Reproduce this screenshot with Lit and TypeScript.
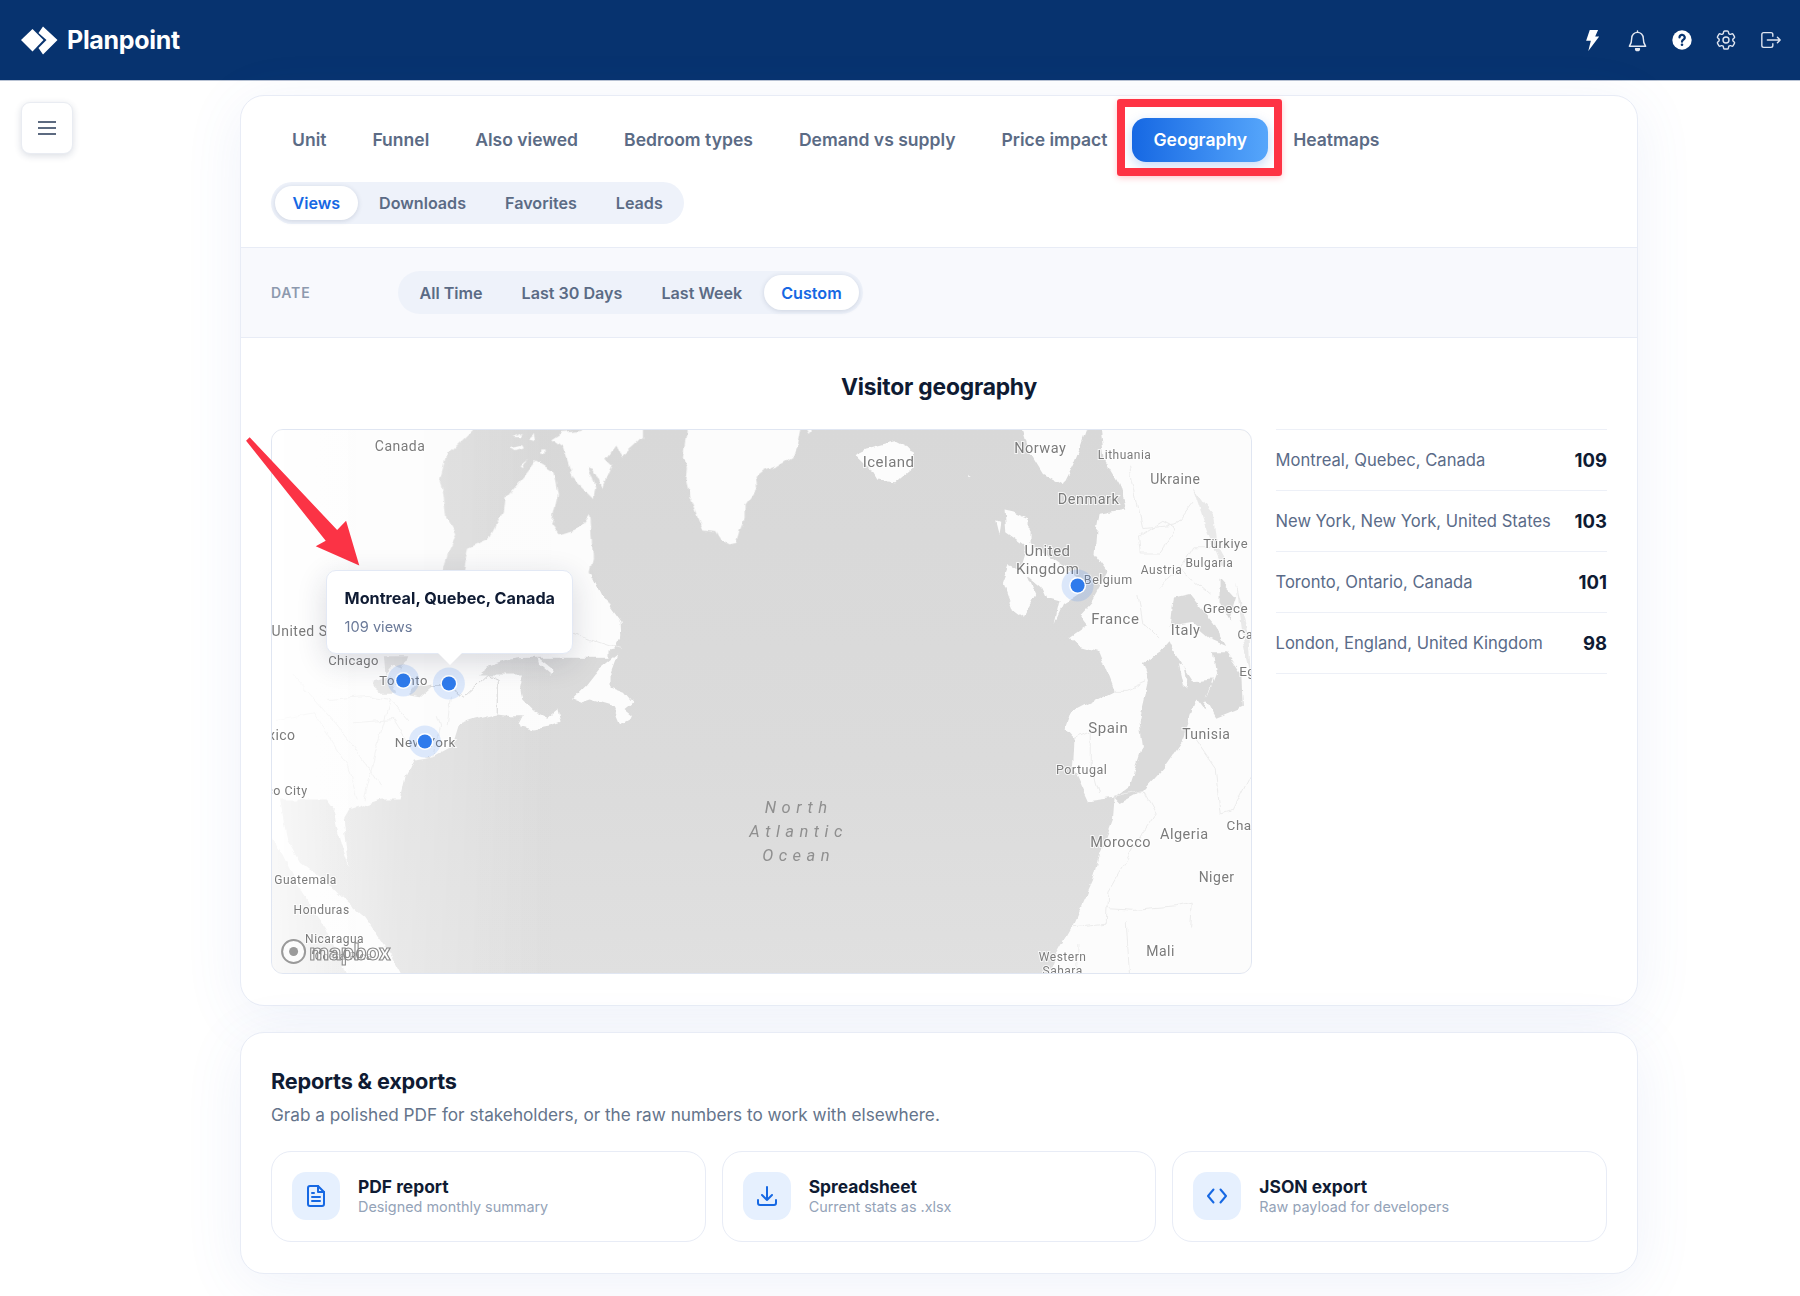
import { LitElement, html, svg, css } from "lit";
import { customElement, state } from "lit/decorators.js";

// map labels: text, centre x/y in page px, font size, anchor
type Label = [string, number, number, number, string?];

const OX = 272.4;
const OY = 430.5;

const LABELS: Label[] = [
  ["Canada", 400.5, 446.5, 14],
  ["United States", 272, 631, 14, "start"],
  ["Chicago", 354, 661, 13],
  ["Toronto", 404, 681, 13],
  ["New York", 425.7, 742, 13.5],
  ["Mexico", 296, 735, 14, "end"],
  ["Mexico City", 308, 791, 12.500, "end"],
  ["Guatemala", 306, 880, 12],
  ["Honduras", 322, 910, 12],
  ["Nicaragua", 335, 939, 12],
  ["Costa Rica", 344, 957, 11],
  ["Iceland", 889, 462, 15],
  ["Norway", 1040.7, 449, 14.5],
  ["Lithuania", 1125, 455.6, 12],
  ["Ukraine", 1175.7, 479, 14],
  ["Denmark", 1089, 499.6, 14.5],
  ["United", 1048, 551.6, 15],
  ["Kingdom", 1048, 569, 15],
  ["Belgium", 1108.7, 580, 12.5],
  ["Türkiye", 1226, 543.6, 13],
  ["Bulgaria", 1209.7, 563.6, 12],
  ["Austria", 1162, 570, 12],
  ["Greece", 1226, 608, 13.5],
  ["France", 1115.7, 619, 15],
  ["Italy", 1186, 631, 14.5],
  ["Cairo", 1238, 635.6, 12, "start"],
  ["Egypt", 1239.7, 671, 13.5, "start"],
  ["Spain", 1108.7, 728, 15],
  ["Tunisia", 1206.7, 734, 14],
  ["Portugal", 1082, 770, 12.5],
  ["Morocco", 1121, 843, 14.5],
  ["Algeria", 1184.7, 834.5, 14.5],
  ["Chad", 1227, 825, 13.5, "start"],
  ["Niger", 1217, 877.5, 14],
  ["Mali", 1161, 951.6, 14],
  ["Western", 1063, 957.5, 12],
  ["Sahara", 1063, 971, 12],
];

const OCEAN = [
  ["North", 808],
  ["Atlantic", 832],
  ["Ocean", 856],
];

const PINS = [
  [449.3, 684],
  [403.7, 681],
  [425.3, 742],
  [1078, 586],
];

const CITIES = [
  ["Montreal, Quebec, Canada", "109"],
  ["New York, New York, United States", "103"],
  ["Toronto, Ontario, Canada", "101"],
  ["London, England, United Kingdom", "98"],
];

const TABS = ["Unit", "Funnel", "Also viewed", "Bedroom types", "Demand vs supply", "Price impact", "Geography", "Heatmaps"];
const METRICS = ["Views", "Downloads", "Favorites", "Leads"];
const RANGES = ["All Time", "Last 30 Days", "Last Week", "Custom"];

const fileIcon = html`<svg viewBox="0 0 24 24" width="24" height="24" fill="none" stroke="#1668e3" stroke-width="2" stroke-linecap="round" stroke-linejoin="round"><path d="M14 2H6a2 2 0 0 0-2 2v16a2 2 0 0 0 2 2h12a2 2 0 0 0 2-2V8z" /><path d="M14 2v6h6" /><path d="M8 13h8M8 17h8M8 9h2" /></svg>`;
const downloadIcon = html`<svg viewBox="0 0 24 24" width="24" height="24" fill="none" stroke="#1668e3" stroke-width="2" stroke-linecap="round" stroke-linejoin="round"><path d="M12 3v13M7 11l5 5 5-5" /><path d="M3 16v3a2 2 0 0 0 2 2h14a2 2 0 0 0 2-2v-3" /></svg>`;
const codeIcon = html`<svg viewBox="0 0 24 24" width="24" height="24" fill="none" stroke="#1668e3" stroke-width="2" stroke-linecap="round" stroke-linejoin="round"><path d="M8.5 5.5 3 12l5.5 6.5M15.5 5.5 21 12l-5.5 6.5" /></svg>`;

const REPORTS = [
  { title: "PDF report", sub: "Designed monthly summary", icon: fileIcon },
  { title: "Spreadsheet", sub: "Current stats as .xlsx", icon: downloadIcon },
  { title: "JSON export", sub: "Raw payload for developers", icon: codeIcon },
];

const mapArt = svg`
  <defs>
    <linearGradient id="sea" x1="0" y1="0" x2="0" y2="1">
      <stop offset="0" stop-color="#d8d8d8" />
      <stop offset="0.6" stop-color="#dbdbdb" />
      <stop offset="1" stop-color="#e0e0e0" />
    </linearGradient>
    <linearGradient id="fade" x1="0" y1="0" x2="1" y2="0">
      <stop offset="0" stop-color="#fff" stop-opacity="0.8" />
      <stop offset="0.45" stop-color="#fff" stop-opacity="0.3" />
      <stop offset="1" stop-color="#fff" stop-opacity="0" />
    </linearGradient>
    <filter id="rough" filterUnits="userSpaceOnUse" x="-20" y="-20" width="1020" height="590">
      <feTurbulence type="fractalNoise" baseFrequency="0.07" numOctaves="3" seed="4" result="n" />
      <feDisplacementMap in="SourceGraphic" in2="n" scale="7" xChannelSelector="R" yChannelSelector="G" />
      <feGaussianBlur stdDeviation="0.4" />
    </filter>
  </defs>
  <rect x="-2" y="-2" width="990" height="550" fill="url(#sea)" />
  <g transform="translate(-1,-1)" filter="url(#rough)">
    <g class="land" transform="translate(-41.4,-9.5) scale(.3571,.3636)">
      <polygon points="90,0 510,0 510,700 600,860 500,930 470,1000 440,1040 335,1075 320,1100 335,1235 320,1190 305,1130 295,1075 215,970 170,890 145,900 135,1010 160,1150 200,1220 270,1270 310,1310 380,1370 450,1470 500,1560 340,1560 270,1400 200,1300 150,1200 90,1100" />
    </g>
    <g class="land" transform="translate(168.6,-4.5) scale(.3333)">
      <polygon points="-100,-10 110,-10 100,14 20,90 0,170 10,200 20,280 50,330 30,370 10,440 15,440 70,440 85,370 150,340 190,260 195,225 250,160 290,110 340,140 355,210 335,295 360,330 420,310 452,268 460,400 450,440 470,500 510,540 510,700 -100,700" />
      <polygon points="335,45 365,25 420,20 440,-10 610,-10 610,40 585,65 545,100 530,60 500,100 520,120 490,190 460,130 445,125 470,190 465,225 400,160 385,115 370,70" />
      <polygon points="218,35 250,22 240,35" /><polygon points="212,72 245,62 250,72 225,80" />
      <polygon points="243,120 265,100 250,125" /><polygon points="265,45 285,25 290,50" />
      <polygon points="305,75 315,75 315,88 305,88" /><polygon points="745,-10 1090,-10 1075,60 1060,95 1010,125 970,140 945,160 950,190 915,240 915,280 900,320 890,355 870,360 845,345 830,320 790,315 770,270 750,220 740,170 745,130 730,100" />
      <polygon points="1090,-10 1140,-10 1110,25" />
    </g>
    <g class="land" transform="translate(-.4,130.5) scale(.3333)">
      <polygon points="-10,40 960,40 1000,120 1050,190 1052,230 1030,270 950,285 870,280 790,290 720,300 660,320 625,345 700,345 760,345 750,390 755,420 790,455 830,475 860,450 870,490 840,500 790,510 745,500 760,470 720,470 680,465 610,480 565,495 545,560 490,590 430,600 405,650 390,720 -10,720" />
      <polygon points="905,420 950,375 985,330 1010,310 1040,285 1020,340 1020,385 1060,400 1085,430 1060,450 1085,470 1050,490 1030,440 960,420 930,430" />
      <polygon points="800,295 850,335 840,345 805,315" />
    </g>
    <g class="land" transform="translate(508.6,-9.5) scale(.3333,.3636)">
      <polygon points="225,95 260,80 345,60 400,85 400,130 350,170 290,165 270,135" />
      <polygon points="720,0 930,0 900,80 880,125 850,180 790,150 750,90" />
      <polygon points="960,0 975,110 1020,180 1040,245 960,260 950,310 945,370 985,420 935,500 900,535 925,565 870,600 900,625 960,640 1005,745 870,810 855,850 885,880 880,960 925,1050 1005,1040 1000,1100 960,1200 940,1270 880,1390 830,1470 790,1560 1450,1560 1450,0" />
      <polygon points="675,250 700,255 750,275 750,340 810,380 830,390 890,430 900,480 850,510 825,560 840,500 800,490 785,460 720,410 740,350 680,310" />
      <polygon points="690,400 740,420 770,480 730,545 700,525 670,450" />
      <polygon points="650,280 665,285 660,315" />
      <polygon points="564,152 570,155 562,162" />
    </g>
    <g class="water" transform="translate(508.6,-9.5) scale(.3333,.3636)">
      <polygon points="1005,1040 1050,1010 1090,900 1080,830 1108,720 1090,670 1140,640 1170,610 1190,650 1240,720 1300,715 1280,770 1275,800 1250,770 1210,880 1150,960 1090,1020 1020,1055" />
      <polygon points="1280,770 1310,820 1390,790 1385,700 1340,640 1300,640 1310,700" />
      <polygon points="1180,490 1230,480 1300,560 1340,620 1290,600 1240,560 1170,570" />
      <polygon points="1320,440 1370,490 1350,550 1320,500" />
    </g>
    <g class="soft" transform="translate(508.6,-9.5) scale(.3333,.3636)">
      <polygon points="1240,190 1300,260 1310,340 1340,390 1325,400 1280,300" />
      <polygon points="1370,450 1410,600 1418,720 1390,600" />
    </g>
    <g class="land" transform="translate(508.6,-9.5) scale(.3333,.3636)">
      <polygon points="1195,670 1212,680 1225,740 1210,730" />
    </g>
    <g class="water" transform="translate(-.4,130.5) scale(.3333)">
      <polygon points="340,290 410,290 395,330 370,320 345,350" />
      <polygon points="420,385 490,375 450,410 420,405" />
      <polygon points="310,365 360,350 380,400 330,400 305,380" />
    </g>
    <g class="line dark" transform="translate(-.4,130.5) scale(.3333)">
      <polyline points="480,378 530,378 580,410 650,345 680,360 680,460" />
    </g>
    <g class="line" transform="translate(-.4,130.5) scale(.3333)">
      <polyline points="60,340 150,440 250,560 330,680" /><polyline points="170,420 300,410 360,420 420,490" />
      <polyline points="250,490 370,480 420,560" /><polyline points="20,480 130,460 230,620 260,720" />
      <polyline points="360,420 320,560 280,720" /><polyline points="500,470 510,500 490,590" />
      <polyline points="540,410 530,500" /><polyline points="900,220 1050,270" />
    </g>
    <g class="line" transform="translate(508.6,-9.5) scale(.3333,.3636)">
      <polyline points="885,880 935,860 935,950 960,1030" /><polyline points="1005,745 1040,745 1100,720" />
      <polyline points="1000,1040 1090,1020 1130,1085 1060,1180 985,1300 980,1385 880,1395" />
      <polyline points="980,1345 1070,1350 1190,1340 1235,1330 1230,1400" /><polyline points="1040,1380 1050,1530" />
      <polyline points="895,1440 895,1530" /><polyline points="1250,880 1310,960 1325,1085 1360,1075 1418,970" />
      <polyline points="1075,480 1090,560 1140,605" /><polyline points="1080,320 1085,370 1140,370 1190,300 1150,280 1080,320" />
      <polyline points="1050,130 1090,300 1190,290 1240,230" /><polyline points="1140,460 1200,410 1290,480" />
      <polyline points="1200,410 1240,350 1330,350" />
    </g>
  </g>
  <rect x="0" y="0" width="280" height="545" fill="url(#fade)" />
`;

@customElement("app-root")
export class AppRoot extends LitElement {
  @state() private tab = "Geography";

  static styles = css`
    :host {
      display: block;
      position: relative;
      height: 1296px;
      overflow: hidden;
      background: #fff;
      font-family: Inter, "Liberation Sans", sans-serif;
      color: #0f1b33;
    }
    .topbar {
      height: 81px;
      box-sizing: border-box;
      background: #07336f;
      border-bottom: 1px solid #b9c3d4;
      display: flex;
      align-items: center;
      padding: 0 7px 0 21px;
    }
    .brand {
      display: flex;
      align-items: center;
      gap: 9px;
      color: #fff;
      font-size: 25px;
      font-weight: 700;
      letter-spacing: -0.3px;
    }
    .top-actions {
      margin-left: auto;
      display: flex;
    }
    .top-actions span {
      width: 44.5px;
      height: 24px;
      display: flex;
      align-items: center;
      justify-content: center;
    }
    .layout {
      display: flex;
      align-items: flex-start;
      padding: 14px 0 0 21px;
    }
    .menu {
      width: 52px;
      height: 52px;
      margin: 7px 167px 0 0;
      flex: none;
      box-sizing: border-box;
      display: flex;
      align-items: center;
      justify-content: center;
      border: 1px solid #e9ecf2;
      border-radius: 9px;
      background: #fff;
      box-shadow: 0 2px 7px rgba(30, 50, 90, 0.16);
    }
    .content {
      width: 1398px;
      flex: none;
      display: flex;
      flex-direction: column;
      gap: 26px;
    }
    .card {
      box-sizing: border-box;
      background: #fff;
      border: 1.5px solid #e8ecf6;
      border-radius: 24px;
      box-shadow: 0 10px 60px rgba(80, 110, 200, 0.09);
    }
    .head {
      padding: 21.5px 30px 23px;
      border-bottom: 1.5px solid #e8ecf6;
    }
    .tabs {
      display: flex;
      gap: 4px;
      margin-bottom: 20px;
    }
    .tab {
      position: relative;
      height: 44px;
      padding: 0 21px;
      display: flex;
      align-items: center;
      font-size: 17.55px;
      font-weight: 600;
      color: #5b6b85;
      border-radius: 14px;
    }
    .tab.on {
      color: #fff;
      background: linear-gradient(90deg, #1668e3, #56a6fb);
      box-shadow: 0 4px 12px rgba(22, 104, 227, 0.25);
    }
    .mark {
      position: absolute;
      inset: -19px -14px -14px -15px;
      border: 8px solid #fe3344;
      border-radius: 3px;
      box-shadow: 0 2px 6px rgba(254, 51, 68, 0.25);
    }
    .seg {
      display: inline-flex;
      gap: 4px;
      padding: 4px;
      border-radius: 22px;
      background: #eef2fa;
    }
    .seg span {
      height: 34.7px;
      padding: 0 17.5px;
      display: flex;
      align-items: center;
      font-size: 16.12px;
      font-weight: 600;
      color: #5b6b85;
      border-radius: 18px;
    }
    .seg span.on {
      background: #fff;
      color: #1668e3;
      box-shadow: 0 1px 5px rgba(30, 50, 90, 0.16);
    }
    .filter {
      display: flex;
      align-items: center;
      background: #f8f9fd;
      padding: 23px 30px;
      border-bottom: 1.5px solid #e8ecf6;
    }
    .filter label {
      width: 127px;
      font-size: 14px;
      font-weight: 600;
      letter-spacing: 0.8px;
      color: #8d99ae;
    }
    .body {
      padding: 30px 30px 31px;
    }
    h2 {
      margin: 0 0 23px;
      font-size: 22.8px;
      line-height: 38px;
      font-weight: 700;
      text-align: center;
      letter-spacing: -0.2px;
    }
    .row {
      display: flex;
      gap: 23.5px;
    }
    .map-wrap {
      position: relative;
      width: 981px;
      height: 545px;
      flex: none;
    }
    .map {
      box-sizing: border-box;
      width: 100%;
      height: 100%;
      border: 1px solid #e0e6f2;
      border-radius: 12px;
      overflow: hidden;
    }
    .map svg {
      display: block;
    }
    .land polygon {
      fill: #fcfcfc;
    }
    .water polygon {
      fill: #dadada;
    }
    .soft polygon {
      fill: #e9e9e9;
    }
    .line polyline {
      fill: none;
      stroke: #ececec;
      stroke-width: 1;
      vector-effect: non-scaling-stroke;
    }
    .line.dark polyline {
      stroke: #d2d2d2;
    }
    .lbl {
      font-family: Roboto, "Noto Sans", sans-serif;
      fill: #7b7b7b;
      stroke: rgba(255, 255, 255, 0.75);
      stroke-width: 2px;
      paint-order: stroke;
      letter-spacing: 0.5px;
      dominant-baseline: central;
    }
    .sea-lbl {
      font-family: Roboto, "Noto Sans", sans-serif;
      font-size: 16.5px;
      font-style: italic;
      fill: #8f8f8f;
      letter-spacing: 5.5px;
      dominant-baseline: central;
      text-anchor: middle;
    }
    .logo-word {
      font-family: Roboto, "Liberation Sans", sans-serif;
      font-size: 22.5px;
      font-weight: 700;
      fill: #fff;
      fill-opacity: 0.55;
      stroke: #8a8a8a;
      stroke-width: 1.1px;
      dominant-baseline: central;
    }
    .arrow {
      position: absolute;
      left: -41.4px;
      top: -9.5px;
      width: 140px;
      height: 150px;
      pointer-events: none;
    }
    .tip {
      position: absolute;
      left: 54.6px;
      top: 141.5px;
      width: 247px;
      height: 84px;
      box-sizing: border-box;
      padding: 17px 18px 0;
      background: #fff;
      border: 1px solid #e3e9f5;
      border-radius: 10px;
      box-shadow: 0 8px 30px rgba(30, 40, 70, 0.16);
    }
    .tip::after {
      content: "";
      position: absolute;
      left: 111px;
      bottom: -12px;
      border-left: 12px solid transparent;
      border-right: 12px solid transparent;
      border-top: 12px solid #fff;
    }
    .tip b {
      display: block;
      font-size: 16.2px;
      line-height: 20px;
      font-weight: 700;
      white-space: nowrap;
    }
    .tip span {
      display: block;
      margin-top: 9px;
      font-size: 14.6px;
      line-height: 20px;
      color: #6b7a99;
    }
    .cities {
      flex: 1;
      border-top: 1.5px solid #edf0f7;
      align-self: flex-start;
    }
    .city {
      box-sizing: border-box;
      height: 61px;
      display: flex;
      align-items: center;
      justify-content: space-between;
      border-bottom: 1.5px solid #edf0f7;
      font-size: 16.6px;
      color: #5a6b88;
    }
    .city b {
      font-size: 18.5px;
      font-weight: 700;
      color: #0f1b33;
    }
    .reports {
      padding: 31px 30px 31px;
    }
    h3 {
      margin: 0 0 4px;
      font-size: 21.7px;
      line-height: 34px;
      font-weight: 700;
      letter-spacing: -0.2px;
    }
    .reports p {
      margin: 0 0 23px;
      font-size: 17.2px;
      line-height: 26px;
      color: #64748b;
    }
    .tiles {
      display: grid;
      grid-template-columns: repeat(3, 1fr);
      gap: 16px;
    }
    .tile {
      box-sizing: border-box;
      height: 91px;
      display: flex;
      align-items: center;
      gap: 18px;
      padding: 0 20px;
      border: 1.5px solid #e8ecf6;
      border-radius: 20px;
    }
    .ico {
      width: 48px;
      height: 48px;
      flex: none;
      display: flex;
      align-items: center;
      justify-content: center;
      background: #e6f0fe;
      border-radius: 14px;
    }
    .tile b {
      display: block;
      font-size: 17.4px;
      line-height: 21px;
      font-weight: 700;
    }
    .tile span {
      display: block;
      font-size: 14.4px;
      line-height: 20px;
      color: #94a3b8;
    }
  `;

  private renderMap() {
    return html`
      <div class="map">
        <svg viewBox="0 0 979 543" width="979" height="543">
          ${mapArt}
          ${LABELS.map(
            ([t, x, y, s, a]) =>
              svg`<text class="lbl" x=${x - OX} y=${y - OY} font-size=${s} text-anchor=${a ?? "middle"}>${t}</text>`,
          )}
          ${OCEAN.map(([t, y]) => svg`<text class="sea-lbl" x=${799 - OX} y=${(y as number) - OY}>${t}</text>`)}
          ${PINS.map(
            ([x, y]) => svg`
              <circle cx=${x - OX} cy=${y - OY} r="16" fill="#3b82f6" fill-opacity="0.17" />
              <circle cx=${x - OX} cy=${y - OY} r="8.5" fill="#fff" />
              <circle cx=${x - OX} cy=${y - OY} r="7" fill="#2f7bec" />`,
          )}
          <circle cx=${294 - OX} cy=${952 - OY} r="11.5" fill="#fff" fill-opacity="0.6" stroke="#9a9a9a" stroke-width="2" />
          <circle cx=${294 - OX} cy=${952 - OY} r="4.5" fill="#9a9a9a" />
          <text class="logo-word" x=${310 - OX} y=${952 - OY}>mapbox</text>
        </svg>
      </div>
      <svg class="arrow" viewBox="0 0 392 412.5" preserveAspectRatio="none">
        <polygon points="45,60 55,50 300,305 325,280 362,403 240,350 268,335" fill="#fb3345" />
      </svg>
      <div class="tip">
        <b>Montreal, Quebec, Canada</b>
        <span>109 views</span>
      </div>
    `;
  }

  render() {
    return html`
      <header class="topbar">
        <div class="brand">
          <svg width="37" height="29" viewBox="21 25 37 29" fill="#fff">
            <polygon points="21,39 32.5,28 43.5,39 32.5,50.5" />
            <polygon points="38.5,32 43,25.5 57.5,39 43,53.5 38.5,47 46.5,39" />
          </svg>
          Planpoint
        </div>
        <div class="top-actions">
          <span>
            <svg width="13.3" height="21" viewBox="82 60 36 58" fill="#fff"><polygon points="92,60 115,60 107,78 118,78 88,118 95,90 82,90" /></svg>
          </span>
          <span>
            <svg width="23" height="23" viewBox="0 0 24 24" fill="none" stroke="#e3e8f2" stroke-width="1.5" stroke-linecap="round" stroke-linejoin="round"><path d="M18 9.500a6 6 0 0 0-12 0c0 5.500-1.800 7.500-2.500 8.500h17c-.7-1-2.500-3-2.500-8.500z" /><path d="M12 3.500V2" /><path d="M10 20.500h4a2 2 0 0 1-4 0z" fill="#e3e8f2" /></svg>
          </span>
          <span>
            <svg width="24" height="24" viewBox="0 0 24 24"><circle cx="12" cy="12" r="9.700" fill="#fff" /><path d="M9.500 9.400a2.600 2.600 0 1 1 3.800 2.300c-.9.500-1.300 1-1.300 2" fill="none" stroke="#07336f" stroke-width="2.200" stroke-linecap="round" /><circle cx="12" cy="16.800" r="1.300" fill="#07336f" /></svg>
          </span>
          <span>
            <svg width="24" height="24" viewBox="0 0 24 24" fill="none" stroke="#dfe5f0" stroke-width="1.400" stroke-linecap="round" stroke-linejoin="round"><path d="M9.594 3.940c.09-.542.56-.94 1.110-.94h2.593c.55 0 1.020.398 1.110.94l.213 1.281c.063.374.313.686.645.870.074.040.147.083.22.127.325.196.72.257 1.075.124l1.217-.456a1.125 1.125 0 0 1 1.370.490l1.296 2.247a1.125 1.125 0 0 1-.26 1.431l-1.003.827c-.293.241-.438.613-.43.992a7.723 7.723 0 0 1 0 .255c-.008.378.137.75.43.991l1.004.827c.424.35.534.955.26 1.430l-1.298 2.247a1.125 1.125 0 0 1-1.369.491l-1.217-.456c-.355-.133-.75-.072-1.076.124a6.470 6.470 0 0 1-.22.128c-.331.183-.581.495-.644.869l-.213 1.281c-.09.543-.56.94-1.110.94h-2.594c-.55 0-1.019-.398-1.110-.94l-.213-1.281c-.062-.374-.312-.686-.644-.870a6.520 6.520 0 0 1-.22-.127c-.325-.196-.72-.257-1.076-.124l-1.217.456a1.125 1.125 0 0 1-1.369-.49l-1.297-2.247a1.125 1.125 0 0 1 .26-1.431l1.004-.827c.292-.24.437-.613.43-.991a6.932 6.932 0 0 1 0-.255c.007-.38-.138-.751-.43-.992l-1.004-.827a1.125 1.125 0 0 1-.26-1.430l1.297-2.247a1.125 1.125 0 0 1 1.370-.491l1.216.456c.356.133.751.072 1.076-.124.072-.044.146-.086.22-.128.332-.183.582-.495.644-.869l.214-1.280z" /><circle cx="12" cy="12" r="3" /></svg>
          </span>
          <span>
            <svg width="22" height="22" viewBox="0 0 24 24" fill="none" stroke="#dfe5f0" stroke-width="1.500" stroke-linecap="round" stroke-linejoin="round"><path d="M14 8V6a2 2 0 0 0-2-2H4a2 2 0 0 0-2 2v12a2 2 0 0 0 2 2h8a2 2 0 0 0 2-2v-2" /><path d="M8 12h14M19 9l3 3-3 3" /></svg>
          </span>
        </div>
      </header>
      <div class="layout">
        <div class="menu">
          <svg width="20" height="16" viewBox="0 0 20 16" fill="none" stroke="#5c6a80" stroke-width="2"><path d="M1 2h18M1 8h18M1 14h18" /></svg>
        </div>
        <div class="content">
          <section class="card">
            <div class="head">
              <div class="tabs">
                ${TABS.map(
                  (t) => html`<div class="tab ${t === this.tab ? "on" : ""}">
                    ${t}${t === this.tab ? html`<i class="mark"></i>` : null}
                  </div>`,
                )}
              </div>
              <div class="seg">
                ${METRICS.map((m) => html`<span class=${m === "Views" ? "on" : ""}>${m}</span>`)}
              </div>
            </div>
            <div class="filter">
              <label>DATE</label>
              <div class="seg">
                ${RANGES.map((r) => html`<span class=${r === "Custom" ? "on" : ""}>${r}</span>`)}
              </div>
            </div>
            <div class="body">
              <h2>Visitor geography</h2>
              <div class="row">
                <div class="map-wrap">${this.renderMap()}</div>
                <div class="cities">
                  ${CITIES.map(([c, n]) => html`<div class="city"><span>${c}</span><b>${n}</b></div>`)}
                </div>
              </div>
            </div>
          </section>
          <section class="card reports">
            <h3>Reports &amp; exports</h3>
            <p>Grab a polished PDF for stakeholders, or the raw numbers to work with elsewhere.</p>
            <div class="tiles">
              ${REPORTS.map(
                (r) => html`<div class="tile">
                  <div class="ico">${r.icon}</div>
                  <div><b>${r.title}</b><span>${r.sub}</span></div>
                </div>`,
              )}
            </div>
          </section>
        </div>
      </div>
    `;
  }
}
